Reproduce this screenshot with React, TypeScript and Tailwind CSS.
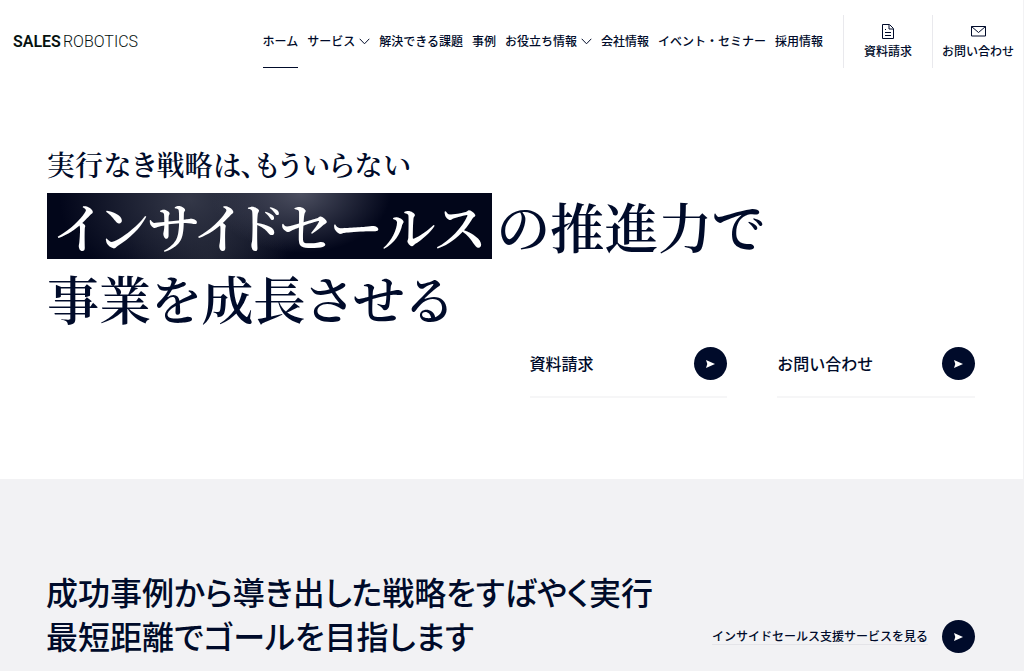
import type { ReactNode } from "react";

const navItems = [
  { label: "ホーム", current: true },
  { label: "サービス", menu: true },
  { label: "解決できる課題" },
  { label: "事例" },
  { label: "お役立ち情報", menu: true },
  { label: "会社情報" },
  { label: "イベント・セミナー" },
  { label: "採用情報" },
];

function Chevron() {
  return (
    <svg className="h-[7px] w-[11px]" viewBox="0 0 11 7" fill="none" stroke="currentColor" aria-hidden="true">
      <path d="M.7.8 5.5 5.8 10.3.8" />
    </svg>
  );
}

function DocumentIcon() {
  return (
    <svg className="h-4 w-3" viewBox="0 0 12 16" fill="none" stroke="currentColor" aria-hidden="true">
      <path d="M.5.5h7L11.500 4.500v10H.5zM7 1v4h4M3 8.500h6M3 11.500h6M3 5.500h1" />
    </svg>
  );
}

function MailIcon() {
  return (
    <svg className="h-4 w-[15px]" viewBox="0 0 15 16" fill="none" stroke="currentColor" aria-hidden="true">
      <path d="M.5 2.500h14v9.500H.5zM.5 2.500l7 6 7-6" />
    </svg>
  );
}

function ArrowDisc() {
  return (
    <span className="flex size-[33px] shrink-0 items-center justify-center rounded-full bg-[#000b2a] text-white">
      <svg className="h-2 w-[9px]" viewBox="0 0 9 8" fill="currentColor" aria-hidden="true">
        <path d="M0 0 9 4 0 8 1.300 4z" />
      </svg>
    </span>
  );
}

function HeaderAction({ label, children, className }: { label: string; children: ReactNode; className: string }) {
  return (
    <a
      href="#"
      className={`flex h-[53px] flex-col items-center justify-center gap-[3px] border-l border-[#e9e9ed] text-xs leading-4 font-medium whitespace-nowrap ${className}`}
    >
      {children}
      {label}
    </a>
  );
}

function HeroLink({ label }: { label: string }) {
  return (
    <a href="#" className="flex h-[51px] flex-1 items-start justify-between border-b-2 border-[#f6f6f7]">
      <span className="text-base leading-[33px] font-medium">{label}</span>
      <ArrowDisc />
    </a>
  );
}

export default function App() {
  return (
    <div className="min-h-screen border-r border-[#f2f2f4] bg-white font-['Noto_Sans_CJK_JP',sans-serif] text-[#000b2a]">
      <header className="flex h-[83px] items-center pl-[13px]">
        <a href="#" className="flex gap-[2px] font-['Roboto',sans-serif] text-base leading-6 text-[#06120f]">
          <span className="font-semibold">SALES</span>
          <span className="font-light">ROBOTICS</span>
        </a>
        <nav className="ml-auto flex gap-[9px] text-xs font-medium" aria-label="メイン">
          {navItems.map((item) => (
            <a
              key={item.label}
              href="#"
              aria-current={item.current ? "page" : undefined}
              className={`flex h-[52px] items-center gap-1 border-b whitespace-nowrap ${
                item.current ? "border-[#000b2a]" : "border-transparent"
              }`}
            >
              {item.label}
              {item.menu && <Chevron />}
            </a>
          ))}
        </nav>
        <div className="ml-5 flex">
          <HeaderAction label="資料請求" className="w-[89px]">
            <DocumentIcon />
          </HeaderAction>
          <HeaderAction label="お問い合わせ" className="w-[91px]">
            <MailIcon />
          </HeaderAction>
        </div>
      </header>

      <main>
        <section className="pt-[58px] pr-12 pb-[81px] pl-[47px]">
          <h1 className="font-['Noto_Serif_CJK_JP','Noto_Sans_CJK_JP',serif] font-semibold whitespace-nowrap [font-feature-settings:'palt']">
            <span className="block text-[28px] leading-[46px]">実行なき戦略は、もういらない</span>
            <span className="mt-[6px] flex text-[54px] leading-[66px]">
              <span className="bg-[#02061a] bg-[radial-gradient(90px_60px_at_57%_0%,#4c4f60_0%,transparent_100%),radial-gradient(130px_90px_at_32%_10%,#343848_0%,transparent_100%),radial-gradient(80px_70px_at_36%_100%,#181c2b_0%,transparent_100%)] px-[7px] text-white">
                インサイドセールス
              </span>
              <span className="pl-1">の推進力で</span>
            </span>
            <span className="mt-[6px] block text-[52px] leading-[66px]">事業を成長させる</span>
          </h1>
          <div className="mt-4 ml-auto flex w-[48%] gap-[50px]">
            <HeroLink label="資料請求" />
            <HeroLink label="お問い合わせ" />
          </div>
        </section>

        <section className="flex items-end justify-between bg-[#f2f2f4] pt-[90px] pr-12 pb-[18px] pl-[46px]">
          <h2 className="text-[32px] leading-[44px] font-medium whitespace-nowrap [font-feature-settings:'palt']">
            成功事例から導き出した戦略をすばやく実行
            <br />
            最短距離でゴールを目指します
          </h2>
          <a href="#" className="mb-1 flex items-center gap-[14px] text-xs leading-4 font-medium whitespace-nowrap">
            <span className="border-b border-[#e4e4e8]">インサイドセールス支援サービスを見る</span>
            <ArrowDisc />
          </a>
        </section>
      </main>
    </div>
  );
}
